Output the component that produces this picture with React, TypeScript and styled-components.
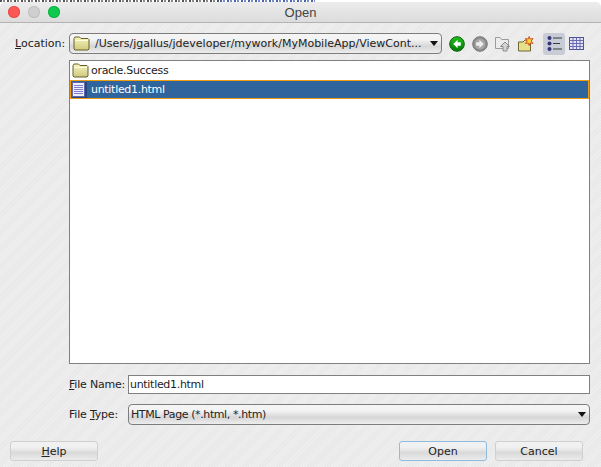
import React from "react";
import styled, { createGlobalStyle } from "styled-components";

const Global = createGlobalStyle`
  html, body { margin: 0; padding: 0; background: #fff; }
  body { font-family: "DejaVu Sans", "Liberation Sans", sans-serif; color: #222; }
`;

const Window = styled.div`
  width: 601px; height: 467px; overflow: hidden;
  display: flex; flex-direction: column; position: relative;
`;
const BehindStrip = styled.div`
  height: 2px; flex: none;
  background:
    repeating-linear-gradient(90deg, #555 0 2px, #fff 2px 3px, #888 3px 5px, #fff 5px 7px) 0 0 / 220px 100% no-repeat,
    repeating-linear-gradient(90deg, #4a64b0 0 2px, #fff 2px 3px, #7a8cc8 3px 5px, #fff 5px 7px) 220px 0 / 95px 100% no-repeat,
    #fff;
`;
const TitleBar = styled.div`
  height: 21px; flex: none; box-sizing: border-box; display: flex; align-items: center; justify-content: center; position: relative;
  background: linear-gradient(#ececec, #dcdcdc);
  border-bottom: 1px solid #b2b2b2; border-radius: 5px 5px 0 0;
  font-family: "Liberation Sans", Arial, sans-serif; font-size: 13px; color: #444;
`;
const Lights = styled.div`
  position: absolute; left: 8px; top: 4px; display: flex; gap: 8px;
`;
const Light = styled.span<{ $c: string; $b: string }>`
  width: 12px; height: 12px; border-radius: 50%; background: ${(p) => p.$c}; box-shadow: inset 0 0 0 1px ${(p) => p.$b};
`;
const Body = styled.div`
  flex: 1; display: flex; flex-direction: column; padding: 10px 11px 6px 10px; position: relative;
  background-color: #ececec;
  background-image: repeating-linear-gradient(135deg, #efefef 0 1px, #e8e8e8 1px 2px);
`;
const Label = styled.span`
  font-size: 11px; color: #222; white-space: nowrap;
  u { text-decoration: underline; }
`;
const LocationRow = styled.div`
  display: flex; align-items: center; height: 21px;
`;
const LocLabel = styled(Label)`
  width: 59px; flex: none; padding-left: 5px; box-sizing: border-box;
`;
const Combo = styled.div`
  box-sizing: border-box; display: flex; align-items: center; position: relative;
  border: 1px solid #7d7d7d; border-radius: 4px;
  background: linear-gradient(#f5f5f5 0, #f3f3f3 30%, #d6d6d6 65%, #ededed 100%);
  font-size: 11px; color: #222; white-space: nowrap;
`;
const LocCombo = styled(Combo)`
  width: 373px; height: 21px; padding-left: 3px; gap: 5px; flex: none;
`;
const Caret = styled.span`
  position: absolute; right: 3px; top: 50%; margin-top: -3px;
  width: 0; height: 0; border-left: 4px solid transparent; border-right: 4px solid transparent; border-top: 5px solid #111;
`;
const Tools = styled.div`
  display: flex; align-items: center; margin-left: 4px; height: 21px;
`;
const Tool = styled.span<{ $active?: boolean }>`
  width: 22px; height: 22px; display: flex; align-items: center; justify-content: center; flex: none;
  border-radius: 3px;
  margin-right: ${(p) => (p.$active ? "0" : "1px")};
  margin-left: ${(p) => (p.$active ? "5px" : "0")};
  background: ${(p) => (p.$active ? "#c7ccd6" : "transparent")};
`;
const List = styled.div`
  margin: 6px 0 0 59px; height: 304px; flex: none; box-sizing: border-box;
  border: 1px solid #808080; background: #fff;
`;
const Item = styled.div<{ $sel?: boolean }>`
  height: 19px; box-sizing: border-box; display: flex; align-items: center; padding-left: 1px;
  gap: ${(p) => (p.$sel ? "4px" : "2px")};
  font-size: 11px; letter-spacing: -0.3px;
  color: ${(p) => (p.$sel ? "#fff" : "#222")};
  background: ${(p) => (p.$sel ? "#30649c" : "transparent")};
  border: ${(p) => (p.$sel ? "1px solid #f09c10" : "1px solid transparent")};
`;
const FormRow = styled.div<{ $top: number; $h: number }>`
  display: flex; align-items: center; margin: ${(p) => p.$top}px 0 0 59px; height: ${(p) => p.$h}px; flex: none;
`;
const FormLabel = styled(Label)`
  width: 59px; flex: none; letter-spacing: -0.2px;
`;
const Input = styled.div`
  flex: 1; height: 100%; box-sizing: border-box; border: 1px solid #808080; background: #fff;
  display: flex; align-items: center; padding-left: 1px; font-size: 11px; letter-spacing: -0.3px; color: #222;
`;
const TypeCombo = styled(Combo)`
  flex: 1; height: 100%; padding-left: 2px; letter-spacing: -0.4px;
`;
const Buttons = styled.div`
  display: flex; margin-top: 16px; padding-right: 7px;
`;
const Btn = styled.div<{ $def?: boolean }>`
  width: 88px; height: 20px; box-sizing: border-box; display: flex; align-items: center; justify-content: center;
  border: 1px solid ${(p) => (p.$def ? "#8fbbe0" : "#cfcfcf")}; border-radius: 3px;
  background: linear-gradient(#f2f2f2 0, #f0f0f0 30%, #d9d9d9 60%, #ececec 100%);
  font-size: 11px; color: #222;
`;
const Spacer = styled.div`
  flex: 1;
`;
const CancelBtn = styled(Btn)`
  margin-left: 8px;
`;

const FolderIcon = ({ id }: { id: string }) => (
  <svg width="17" height="15" viewBox="0 0 17 15">
    <defs>
      <linearGradient id={id} x1="0" y1="0" x2="0" y2="1">
        <stop offset="0" stopColor="#f8f5c0" />
        <stop offset="1" stopColor="#cfc97c" />
      </linearGradient>
    </defs>
    <path d="M1 2.5 L2 1 H6.5 L8 2.5 H15 L16 3.5 V13 L15 14 H2 L1 13 Z" fill={`url(#${id})`} stroke="#65622e" />
    <path d="M2 4.5 H15" stroke="#fffde0" />
  </svg>
);
const FileIcon = () => (
  <svg width="15" height="16" viewBox="0 0 15 16">
    <rect x="0" y="0" width="15" height="16" fill="#23487a" />
    <rect x="0.5" y="0.5" width="12" height="14" fill="#eeeefa" stroke="#6464ac" />
    <path d="M2 3.5H11M2 5.5H11M2 7.5H11M2 9.5H11M2 11.5H11" stroke="#7d7dc8" />
  </svg>
);
const BackIcon = () => (
  <svg width="16" height="16" viewBox="0 0 16 16">
    <defs>
      <linearGradient id="bk" x1="0" y1="0" x2="0" y2="1">
        <stop offset="0" stopColor="#1fc21f" />
        <stop offset="1" stopColor="#067a06" />
      </linearGradient>
    </defs>
    <circle cx="8" cy="8" r="7.3" fill="url(#bk)" stroke="#0b620b" />
    <path d="M8.6 3.8 L4.2 8 L8.6 12.2 V9.8 H11.8 V6.2 H8.6 Z" fill="#fff" />
  </svg>
);
const ForwardIcon = () => (
  <svg width="16" height="16" viewBox="0 0 16 16">
    <circle cx="8" cy="8" r="7.3" fill="#8c8c8c" stroke="#777" />
    <circle cx="8" cy="8" r="5.4" fill="#a6a6a6" />
    <path d="M7.4 3.8 L11.8 8 L7.4 12.2 V9.8 H4.2 V6.2 H7.4 Z" fill="#eee" />
  </svg>
);
const UpIcon = () => (
  <svg width="16" height="16" viewBox="0 0 16 16">
    <path d="M0.5 1.5 H5 L6.5 3.5 H13.5 V12.5 H0.5 Z" fill="#ececec" stroke="#9c9c9c" />
    <path d="M10 6 L14.5 10.5 H12 V15 H8 V10.5 H5.5 Z" fill="#d2d6da" stroke="#8a8a8a" />
  </svg>
);
const NewFolderIcon = () => (
  <svg width="16" height="16" viewBox="0 0 16 16">
    <path d="M0.5 6 L5 6 L7 4 H12.5 V15 H0.5 Z" fill="#e6e08c" stroke="#6b6732" />
    <path d="M11.2 0.5 L12.2 3 L15 2.6 L13.2 5 L15 7.4 L12.2 7 L11.2 9.5 L10.2 7 L7.4 7.4 L9.2 5 L7.4 2.6 L10.2 3 Z" fill="#ffd23a" stroke="#c8421a" strokeWidth="0.9" />
  </svg>
);
const ListViewIcon = () => (
  <svg width="15" height="15" viewBox="0 0 15 15">
    <circle cx="2.5" cy="2" r="2" fill="#33337a" /><circle cx="2.5" cy="7.5" r="2" fill="#33337a" /><circle cx="2.5" cy="13" r="2" fill="#33337a" />
    <path d="M6 2H15M6 7.5H13M6 13H15" stroke="#3a3a3a" strokeWidth="1.2" />
  </svg>
);
const TableIcon = () => (
  <svg width="15" height="13" viewBox="0 0 15 13">
    <rect x="0.5" y="0.5" width="14" height="12" fill="#e4e4f6" stroke="#50509a" />
    <path d="M0.5 3.5H14.5M0.5 6.5H14.5M0.5 9.5H14.5M4 0.5V12.5M7.5 0.5V12.5M11 0.5V12.5" stroke="#6a6ab0" strokeWidth="1" />
  </svg>
);

export default function App() {
  return (
    <Window>
      <Global />
      <BehindStrip />
      <TitleBar>
        <Lights>
          <Light $c="#fc5753" $b="#e84e4a" />
          <Light $c="#cfcfcf" $b="#bfbfbf" />
          <Light $c="#10c84e" $b="#0eb545" />
        </Lights>
        Open
      </TitleBar>
      <Body>
        <LocationRow>
          <LocLabel><u>L</u>ocation:</LocLabel>
          <LocCombo>
            <FolderIcon id="f1" />
            /Users/jgallus/jdeveloper/mywork/MyMobileApp/ViewCont...
            <Caret />
          </LocCombo>
          <Tools>
            <Tool><BackIcon /></Tool>
            <Tool><ForwardIcon /></Tool>
            <Tool><UpIcon /></Tool>
            <Tool><NewFolderIcon /></Tool>
            <Tool $active><ListViewIcon /></Tool>
            <Tool><TableIcon /></Tool>
          </Tools>
        </LocationRow>
        <List>
          <Item><FolderIcon id="f2" />oracle.Success</Item>
          <Item $sel><FileIcon />untitled1.html</Item>
        </List>
        <FormRow $top={11} $h={19}>
          <FormLabel><u>F</u>ile Name:</FormLabel>
          <Input>untitled1.html</Input>
        </FormRow>
        <FormRow $top={10} $h={21}>
          <FormLabel>File <u>T</u>ype:</FormLabel>
          <TypeCombo>HTML Page (*.html, *.htm)<Caret /></TypeCombo>
        </FormRow>
        <Buttons>
          <Btn><span><u>H</u>elp</span></Btn>
          <Spacer />
          <Btn $def>Open</Btn>
          <CancelBtn>Cancel</CancelBtn>
        </Buttons>
      </Body>
    </Window>
  );
}
